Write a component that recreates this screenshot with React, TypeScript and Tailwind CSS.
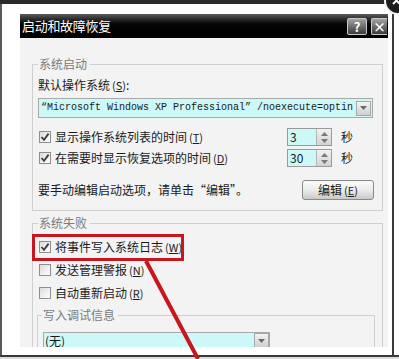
import React from 'react';

const Key: React.FC<{ k: string }> = ({ k }) => (
  <span className="ml-[2px] text-[11px]">
    (<span className="underline">{k}</span>)
  </span>
);

const CheckBox: React.FC<{ checked?: boolean }> = ({ checked }) => (
  <span className="w-[12px] h-[12px] shrink-0 border border-[#8e8e8e] bg-gradient-to-br from-[#dcdcdc] to-white flex items-center justify-center">
    {checked && (
      <svg width="10" height="10" viewBox="0 0 10 10">
        <path d="M1.5 5 L4 7.8 L8.6 1.6" fill="none" stroke="#3c3c3c" strokeWidth="1.8" />
      </svg>
    )}
  </span>
);

const DropBtn: React.FC = () => (
  <span className="w-[15px] h-[15px] shrink-0 border border-[#a8a8a8] bg-gradient-to-b from-[#f4f4f4] to-[#cfcfcf] flex items-center justify-center">
    <svg width="7" height="4" viewBox="0 0 7 4">
      <path d="M0 0 L7 0 L3.5 4 Z" fill="#6a6a6a" />
    </svg>
  </span>
);

const Spinner: React.FC<{ value: string }> = ({ value }) => (
  <div className="w-[45px] h-[18px] border border-[#9a9a9a] bg-[#cdf8f8] flex items-center">
    <span className="flex-1 pl-[2px] text-[12px] leading-[16px]">{value}</span>
    <span className="w-[15px] h-[16px] border-l border-[#b4b4b4] bg-gradient-to-b from-[#f2f2f2] to-[#d2d2d2] flex flex-col items-center justify-center gap-[3px]">
      <svg width="7" height="4" viewBox="0 0 7 4">
        <path d="M0 4 L7 4 L3.5 0 Z" fill="#777" />
      </svg>
      <svg width="7" height="4" viewBox="0 0 7 4">
        <path d="M0 0 L7 0 L3.5 4 Z" fill="#777" />
      </svg>
    </span>
  </div>
);

const Group: React.FC<{ title: string; className?: string; children: React.ReactNode }> = ({ title, className, children }) => (
  <fieldset className={`border border-[#cfcfcf] ${className || ''}`}>
    <legend className="pl-[1px] pr-[3px] text-[12px] leading-[16px] text-[#7a7a7a]">{title}</legend>
    {children}
  </fieldset>
);

const CheckRow: React.FC<{ checked?: boolean; label: string; k: string }> = ({ checked, label, k }) => (
  <div className="flex items-center h-[16px] pl-[1px] gap-[4px]">
    <CheckBox checked={checked} />
    <span>
      {label}
      <Key k={k} />
    </span>
  </div>
);

export default function App() {
  return (
    <div className="relative w-[399px] h-[359px] bg-white overflow-hidden font-['Noto_Sans_CJK_SC',sans-serif] text-[12px] leading-[16px] text-[#1a1a1a]">
      <div className="h-[4px] bg-[#2a2a2a]" />
      <div className="flex h-[351px]">
        <div className="w-[2px] bg-[#5a5a5a]" />
        <div className="w-[18px]" />
        <div className="w-[368px] pt-[10px] pb-[8px] flex flex-col">
          <div className="h-[24px] shrink-0 bg-gradient-to-b from-[#5c5c5c] via-[#080808] via-40% to-black flex items-center pl-[2px] pr-[1px]">
            <span className="flex-1 text-white text-[13px] tracking-[-0.3px]">启动和故障恢复</span>
            <span className="w-[20px] h-[17px] border border-[#c9c9c9] rounded-[2px] bg-gradient-to-b from-[#a4a4a4] to-[#3c3c3c] text-white font-bold text-[13px] leading-[15px] text-center">?</span>
            <span className="ml-[4px] w-[16px] h-[17px] border border-r-0 border-[#c9c9c9] rounded-l-[2px] bg-gradient-to-b from-[#a4a4a4] to-[#3c3c3c] text-white font-bold text-[13px] leading-[15px] text-center">×</span>
          </div>
          <div className="flex-1 bg-[#f3f3f3] overflow-hidden pt-[18px] pl-[12px]">
            <Group title="系统启动" className="w-[351px] pl-[5px] pr-[5px] pb-[10px]">
              <div className="mt-[5px]">
                默认操作系统
                <Key k="S" />:
              </div>
              <div className="mt-[5px] w-[335px] h-[20px] border border-[#a9a9a9] bg-[#cdf8f8] flex items-center pl-[2px] pr-[1px]">
                <span className="flex-1 font-['Liberation_Mono',monospace] text-[10px] whitespace-nowrap overflow-hidden">
                  “Microsoft Windows XP Professional” /noexecute=optin
                </span>
                <DropBtn />
              </div>
              <div className="mt-[10px] flex items-center">
                <div className="w-[249px]">
                  <CheckRow checked label="显示操作系统列表的时间" k="T" />
                </div>
                <Spinner value="3" />
                <span className="ml-[9px]">秒</span>
              </div>
              <div className="mt-[3px] flex items-center">
                <div className="w-[249px]">
                  <CheckRow checked label="在需要时显示恢复选项的时间" k="D" />
                </div>
                <Spinner value="30" />
                <span className="ml-[9px]">秒</span>
              </div>
              <div className="mt-[13px] flex items-center">
                <span className="w-[264px]">要手动编辑启动选项，请单击“编辑”。</span>
                <span className="w-[72px] h-[20px] border border-[#8a8a8a] rounded-[3px] bg-gradient-to-b from-[#fbfbfb] via-[#ececec] to-[#c9c9c9] flex items-center justify-center">
                  编辑
                  <Key k="E" />
                </span>
              </div>
            </Group>
            <Group title="系统失败" className="mt-[4px] w-[351px] pl-[5px] pr-[5px] pb-[10px]">
              <div className="mt-[8px]">
                <CheckRow checked label="将事件写入系统日志" k="W" />
              </div>
              <div className="mt-[7px]">
                <CheckRow label="发送管理警报" k="N" />
              </div>
              <div className="mt-[7px]">
                <CheckRow label="自动重新启动" k="R" />
              </div>
              <Group title="写入调试信息" className="mt-[6px] -ml-[1px] w-[338px] pl-[4px] pr-[4px] pb-[10px]">
                <div className="mt-[9px] ml-[1px] w-[227px] h-[17px] border border-[#a9a9a9] bg-[#cdf8f8] flex items-center pl-[1px]">
                  <span className="flex-1">(无)</span>
                  <DropBtn />
                </div>
              </Group>
            </Group>
          </div>
        </div>
        <div className="w-[4px]" />
        <div className="w-[2px] bg-[#3a3a3a]" />
      </div>
      <div className="h-[2px] bg-[#3a3a3a]" />
      <div className="h-[2px] bg-[#dcdcdc]" />

      {/* red annotation */}
      <div className="absolute left-[32px] top-[234px] w-[152px] h-[27px] border-[3px] border-[#c8161e]" />
      <svg className="absolute left-0 top-0" width="399" height="359" viewBox="0 0 399 359">
        <line x1="146" y1="261" x2="198" y2="359" stroke="#c8161e" strokeWidth="4" />
      </svg>

      {/* viewer close button */}
      <svg className="absolute right-0 top-0" width="18" height="16" viewBox="0 0 18 16">
        <circle cx="17" cy="1" r="13" fill="#1e1e1e" stroke="#f4f4f4" strokeWidth="2" />
        <path d="M12 -3 L19 4 M19 -3 L12 4" stroke="#fff" strokeWidth="2" />
      </svg>
    </div>
  );
}
